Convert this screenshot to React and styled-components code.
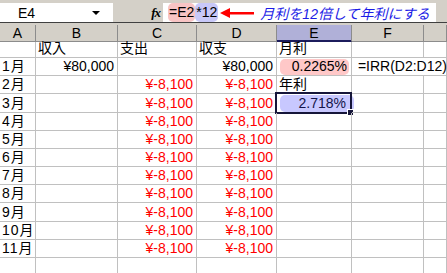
import React from "react";
import styled, { createGlobalStyle } from "styled-components";

const GlobalStyle = createGlobalStyle`
  html, body {
    margin: 0;
    padding: 0;
    background: #ffffff;
  }
  body {
    font-family: "Liberation Sans", "Noto Sans CJK JP", sans-serif;
    font-size: 14px;
    color: #000;
    overflow: hidden;
  }
`;

const GRID_COLS = "36px 82px 79px 80px 75px 72px 1fr";

const Sheet = styled.div`
  width: 447px;
  height: 273px;
  overflow: hidden;
  background: #fff;
`;

const Toolbar = styled.div`
  background: #d4d0c8;
  padding-top: 3px;
  padding-bottom: 2px;
`;

const FormulaBar = styled.div`
  display: flex;
  align-items: stretch;
  height: 19px;
  border-bottom: 1px solid #404040;
`;

const NameBox = styled.div`
  width: 113px;
  background: #fff;
  display: flex;
  align-items: center;
  padding-left: 18px;
  box-sizing: border-box;
  position: relative;
  font-size: 14px;
`;

const DropArrow = styled.span`
  position: absolute;
  left: 92px;
  top: 8px;
  width: 0;
  height: 0;
  border-left: 4px solid transparent;
  border-right: 4px solid transparent;
  border-top: 4px solid #000;
`;

const FxLabel = styled.div`
  width: 50px;
  display: flex;
  align-items: center;
  justify-content: flex-end;
  padding-right: 3px;
  box-sizing: border-box;
  font-family: "Liberation Serif", serif;
  font-style: italic;
  font-weight: bold;
  font-size: 13px;
  letter-spacing: -1px;
`;

const FormulaInput = styled.div`
  width: 273px;
  background: #fff;
  display: flex;
  align-items: center;
  padding-left: 5px;
  box-sizing: border-box;
  white-space: nowrap;
`;

const Ref = styled.span`
  background: ${(p) => p.$bg};
  border-radius: 5px;
  padding: 1px 1px;
  line-height: 17px;
`;

const Note = styled.span`
  color: #1c1ce6;
  font-style: italic;
  margin-left: 6px;
  font-size: 14px;
`;

const Grid = styled.div`
  display: grid;
  grid-template-columns: ${GRID_COLS};
  grid-template-rows: 17px 16px repeat(12, 18.18px);
`;

const HeadCell = styled.div`
  background: ${(p) => (p.$active ? "#b0b0d8" : "#d4d0c8")};
  border-right: 1px solid #8c8c8c;
  border-bottom: 1px solid ${(p) => (p.$active ? "#1c1c5c" : "#8c8c8c")};
  box-shadow: ${(p) => (p.$active ? "inset 0 -1px 0 #1c1c5c" : "none")};
  box-sizing: border-box;
  display: flex;
  align-items: center;
  justify-content: center;
  font-size: 14px;
`;

const Cell = styled.div`
  position: relative;
  box-sizing: border-box;
  border-right: 1px solid #c0c0c0;
  border-bottom: 1px solid #c0c0c0;
  display: flex;
  align-items: flex-end;
  justify-content: ${(p) => (p.$right ? "flex-end" : "flex-start")};
  padding: 0 3px 0 2px;
  color: ${(p) => (p.$red ? "#ff0000" : "#000")};
  white-space: nowrap;
  line-height: 17px;
  grid-column: ${(p) => (p.$span ? `span ${p.$span}` : "auto")};
`;

const MonthCell = styled(Cell)`
  letter-spacing: 1px;
`;

const Mark = styled.div`
  flex: 1;
  align-self: stretch;
  margin: 1px ${(p) => (p.$over ? "-6px" : "-1px")} 0 1px;
  padding-right: ${(p) => (p.$over ? "8px" : "2px")};
  background: ${(p) => p.$bg};
  border-radius: 5px;
  display: flex;
  align-items: flex-end;
  justify-content: flex-end;
  color: ${(p) => p.$ink || "#000"};
`;

const Selection = styled.div`
  position: absolute;
  top: -2px;
  left: -2px;
  right: -1px;
  bottom: -2px;
  border: 2px solid #16163a;
  pointer-events: none;
  &::after {
    content: "";
    position: absolute;
    right: -4px;
    bottom: -4px;
    width: 5px;
    height: 5px;
    background: #16163a;
    border: 1px solid #fff;
  }
`;

const ArrowSvg = () => (
  <svg width="34" height="12" viewBox="0 0 34 12" style={{ marginLeft: 2 }}>
    <path d="M0 6 L10 1 L10 11 Z" fill="#ff0000" />
    <rect x="9" y="5" width="25" height="2.5" fill="#ff0000" />
  </svg>
);

const months = ["4月", "5月", "6月", "7月", "8月", "9月", "10月", "11月"];

const App = () => {
  return (
    <Sheet>
      <GlobalStyle />
      <Toolbar>
        <FormulaBar>
          <NameBox>
            E4
            <DropArrow />
          </NameBox>
          <FxLabel>fx</FxLabel>
          <FormulaInput>
            <Ref $bg="#f8c4c4">=E2</Ref>
            <Ref $bg="#c8c8f8">*12</Ref>
            <ArrowSvg />
            <Note>月利を12倍して年利にする</Note>
          </FormulaInput>
        </FormulaBar>
      </Toolbar>
      <Grid>
        <HeadCell>A</HeadCell>
        <HeadCell>B</HeadCell>
        <HeadCell>C</HeadCell>
        <HeadCell>D</HeadCell>
        <HeadCell $active>E</HeadCell>
        <HeadCell>F</HeadCell>
        <HeadCell />

        <Cell />
        <Cell>収入</Cell>
        <Cell>支出</Cell>
        <Cell>収支</Cell>
        <Cell>月利</Cell>
        <Cell />
        <Cell />

        <MonthCell>1月</MonthCell>
        <Cell $right>¥80,000</Cell>
        <Cell />
        <Cell $right>¥80,000</Cell>
        <Cell>
          <Mark $bg="#ffc8c8">0.2265%</Mark>
        </Cell>
        <Cell $span={2}>&nbsp;=IRR(D2:D12)</Cell>

        <MonthCell>2月</MonthCell>
        <Cell />
        <Cell $right $red>¥-8,100</Cell>
        <Cell $right $red>¥-8,100</Cell>
        <Cell>年利</Cell>
        <Cell />
        <Cell />

        <MonthCell>3月</MonthCell>
        <Cell />
        <Cell $right $red>¥-8,100</Cell>
        <Cell $right $red>¥-8,100</Cell>
        <Cell>
          <Mark $bg="#c8c8ff" $over $ink="#14144a">2.718%</Mark>
          <Selection />
        </Cell>
        <Cell />
        <Cell />

        {months.map((m) => (
          <React.Fragment key={m}>
            <MonthCell>{m}</MonthCell>
            <Cell />
            <Cell $right $red>¥-8,100</Cell>
            <Cell $right $red>¥-8,100</Cell>
            <Cell />
            <Cell />
            <Cell />
          </React.Fragment>
        ))}

        <Cell />
        <Cell />
        <Cell />
        <Cell />
        <Cell />
        <Cell />
        <Cell />
      </Grid>
    </Sheet>
  );
};

export default App;
